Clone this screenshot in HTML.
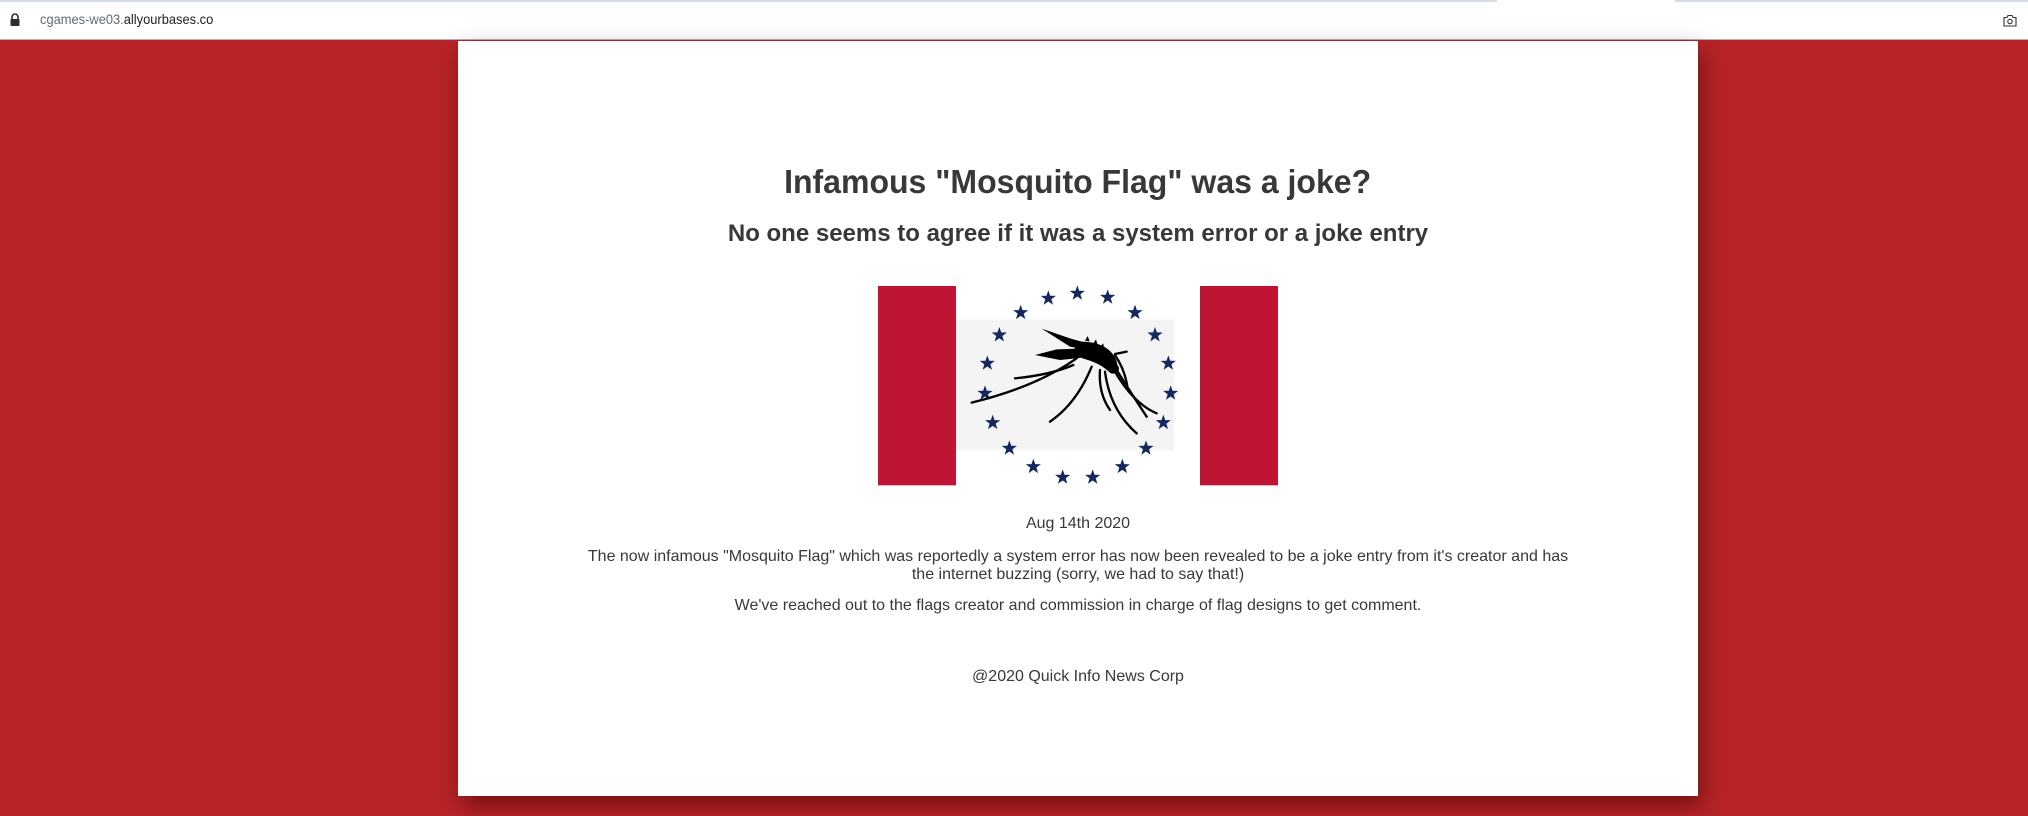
<!DOCTYPE html>
<html><head><meta charset="utf-8"><style>
html,body{margin:0;padding:0;width:2028px;height:816px;overflow:hidden;background:#b92428;font-family:"Liberation Sans",Arial,sans-serif}
#bar{position:absolute;left:0;top:0;width:2028px;height:40px;background:#fff;border-bottom:1px solid #aab6c0;box-sizing:border-box}
#bar .strip{position:absolute;top:0;height:2px;background:#d5dce3}
#url{position:absolute;left:40px;top:11px;font-size:14px;color:#5f6a75;transform:scaleX(.92);transform-origin:left}
#url b{font-weight:normal;color:#1f1f1f}
#card{position:absolute;left:458px;top:41px;width:1240px;height:755px;background:#fff;box-shadow:4px 10px 22px rgba(60,0,0,.55)}
.t{position:absolute;left:458px;width:1240px;text-align:center;color:#383838}
.t span{display:inline-block}
</style></head><body>
<div id="bar">
<div class="strip" style="left:0;width:1497px"></div>
<div class="strip" style="left:1675px;width:353px"></div>
<svg style="position:absolute;left:9px;top:13px" width="12" height="14" viewBox="0 0 12 14"><path d="M3 6V4a3 3 0 0 1 6 0v2" fill="none" stroke="#2b2f33" stroke-width="1.6"/><rect x="1.5" y="6" width="9" height="7" rx="1" fill="#2b2f33"/></svg>
<div id="url">cgames-we03.<b>allyourbases.co</b></div>
<svg style="position:absolute;left:2003px;top:14px" width="14" height="13" viewBox="0 0 14 13"><path d="M1 3.5h3l1-2h4l1 2h3v8.5H1z" fill="none" stroke="#333" stroke-width="1.1"/><circle cx="7" cy="7.5" r="2.2" fill="none" stroke="#333" stroke-width="1.1"/></svg>
</div>
<div id="card"></div>
<div class="t" style="top:163px;font-size:33px;font-weight:bold"><span style="transform:scaleX(.97)">Infamous "Mosquito Flag" was a joke?</span></div>
<div class="t" style="top:220px;font-size:24px;font-weight:bold"><span>No one seems to agree if it was a system error or a joke entry</span></div>
<svg style="position:absolute;left:870px;top:270px" width="420" height="230" viewBox="0 0 1260 690">
<rect x="24" y="48" width="234" height="598" fill="#be1535"/>
<rect x="990" y="48" width="234" height="598" fill="#be1535"/>
<rect x="258" y="48" width="732" height="598" fill="#fff"/>
<rect x="258" y="148" width="654" height="392" fill="#f4f4f4"/>
<defs><polygon id="s" points="0,-24 5.6,-7.7 22.8,-7.4 9.1,2.9 14.1,19.4 0,9.6 -14.1,19.4 -9.1,2.9 -22.8,-7.4 -5.6,-7.7" fill="#14275e"/></defs>
<use href="#s" x="622" y="70"/><use href="#s" x="535" y="85"/><use href="#s" x="713" y="82"/>
<use href="#s" x="452" y="128"/><use href="#s" x="795" y="128"/><use href="#s" x="388" y="195"/>
<use href="#s" x="855" y="195"/><use href="#s" x="352" y="280"/><use href="#s" x="895" y="280"/>
<use href="#s" x="345" y="370"/><use href="#s" x="902" y="370"/><use href="#s" x="368" y="458"/>
<use href="#s" x="880" y="458"/><use href="#s" x="418" y="535"/><use href="#s" x="828" y="535"/>
<use href="#s" x="490" y="590"/><use href="#s" x="757" y="590"/><use href="#s" x="578" y="622"/><use href="#s" x="668" y="622"/>
<g fill="#000">
<path d="M515 176 L600 205 L660 222 L650 240 L600 230 Z"/>
<path d="M495 255 L560 238 L650 235 L645 262 L570 270 Z"/>
<path d="M620 215 Q690 212 722 245 Q745 270 742 295 L712 302 Q690 280 640 266 L610 250 Z"/>
<ellipse cx="730" cy="296" rx="17" ry="15"/>
<path d="M645 212 l8 -14 l6 16 z M670 220 l8 -12 l4 14 z M690 230 l10 -10 l2 14 z"/>
</g>
<g fill="none" stroke="#000" stroke-width="7" stroke-linecap="round">
<path d="M620 265 Q500 350 305 398"/>
<path d="M435 325 Q540 315 610 285"/>
<path d="M665 290 Q620 400 540 455"/>
<path d="M690 300 Q685 370 720 420"/>
<path d="M705 305 Q720 420 800 490"/>
<path d="M735 305 Q790 400 860 430"/>
<path d="M740 300 Q790 380 830 440"/>
<path d="M735 255 Q765 300 772 350"/>
<path d="M735 252 L770 245"/>
</g>
</svg>
<div class="t" style="top:515px;font-size:16px">Aug 14th 2020</div>
<div class="t" style="top:548px;font-size:16px;line-height:18px"><span style="width:990px">The now infamous "Mosquito Flag" which was reportedly a system error has now been revealed to be a joke entry from it's creator and has the internet buzzing (sorry, we had to say that!)</span></div>
<div class="t" style="top:597px;font-size:16px">We've reached out to the flags creator and commission in charge of flag designs to get comment.</div>
<div class="t" style="top:668px;font-size:16px">@2020 Quick Info News Corp</div>
</body></html>
